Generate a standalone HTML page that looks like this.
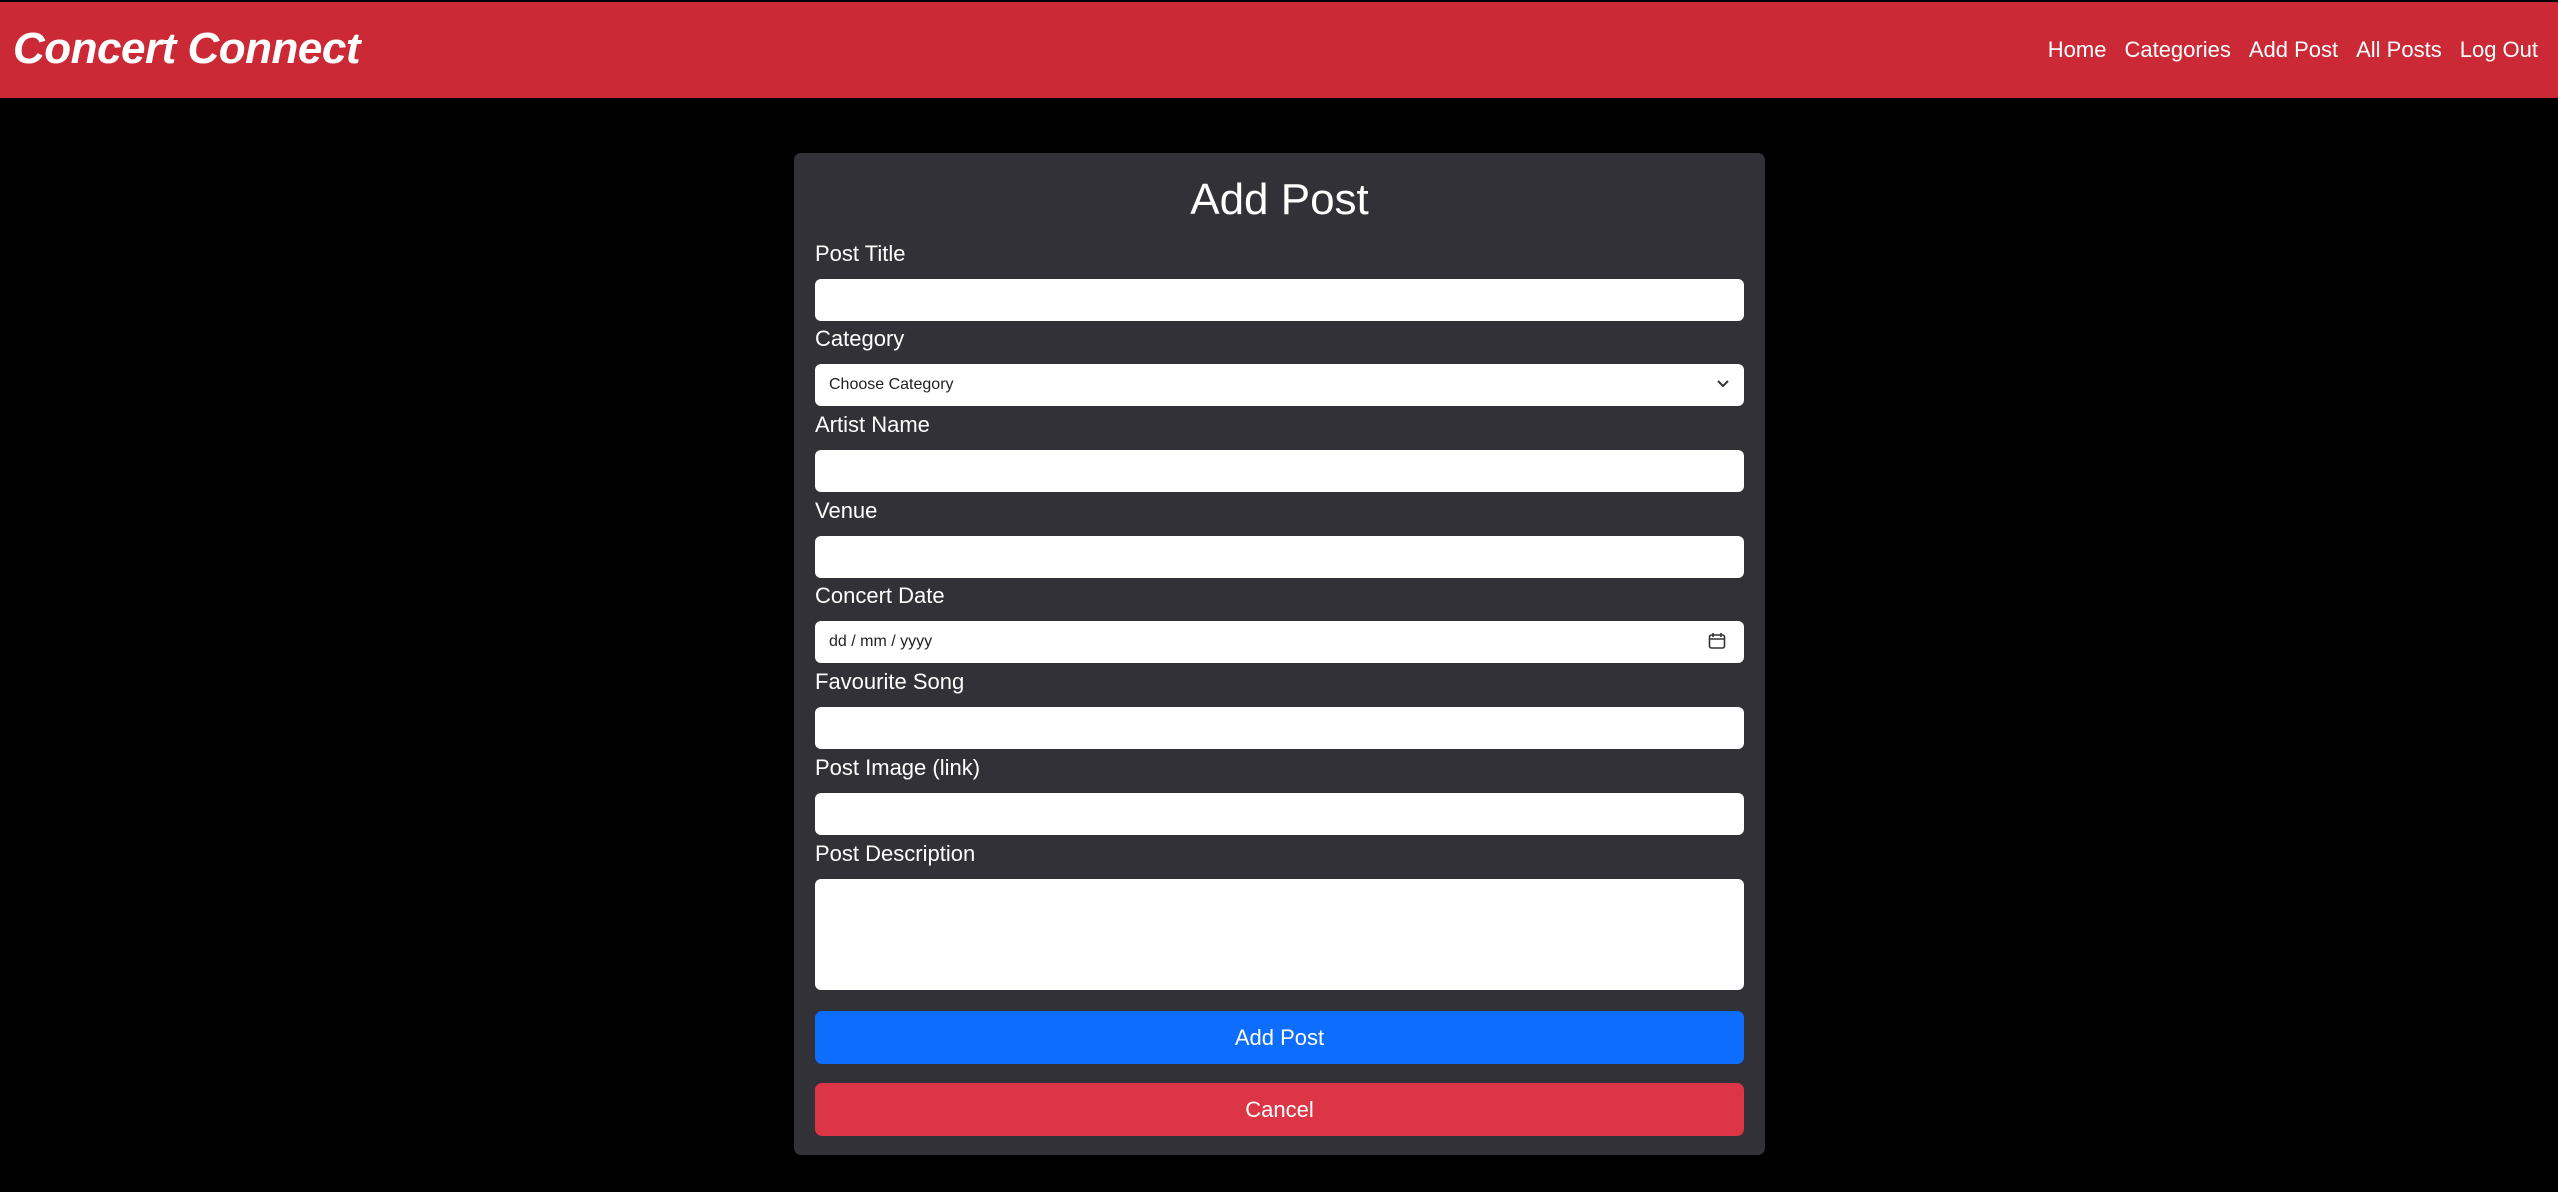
<!DOCTYPE html>
<html><head><meta charset="utf-8"><style>
body{margin:0;width:2558px;height:1192px;background:#000;font-family:"Liberation Sans",sans-serif;position:relative;overflow:hidden}
.nav{position:absolute;left:0;top:2px;width:2558px;height:96px;background:#cc2936}
.brand{position:absolute;left:13px;top:22px;font-size:44px;font-weight:bold;font-style:italic;color:#fff;letter-spacing:-0.5px}
.links{position:absolute;right:20px;top:35px;font-size:22px;color:#fff}
.links span{margin-left:18px}
.card{position:absolute;left:794px;top:153px;width:971px;height:1002px;background:#323137;border-radius:7px}
h1{position:absolute;left:0;width:971px;top:175px;margin:0;text-align:center;color:#fff;font-weight:normal;font-size:44px}
.lbl{position:absolute;left:815px;color:#fff;font-size:22px}
.in{position:absolute;left:815px;width:929px;height:42px;background:#fff;border-radius:6px}
.ph{position:absolute;left:14px;top:12px;font-size:16px;color:#222}
.btn{position:absolute;left:815px;width:929px;height:53px;border-radius:7px;color:#fff;font-size:22px;text-align:center;line-height:53px}
</style></head><body>
<div class="nav"><div class="brand">Concert Connect</div>
<div class="links"><span>Home</span><span>Categories</span><span>Add Post</span><span>All Posts</span><span>Log Out</span></div></div>
<div class="card"></div>
<h1 style="left:794px">Add Post</h1>
<div class="lbl" style="top:241px">Post Title</div><div class="in" style="top:279px"></div>
<div class="lbl" style="top:326px">Category</div><div class="in" style="top:364px"><div class="ph">Choose Category</div><svg style="position:absolute;right:14px;top:15px" width="14" height="10"><path d="M2 2l5 5 5-5" stroke="#333" stroke-width="2" fill="none"/></svg></div>
<div class="lbl" style="top:412px">Artist Name</div><div class="in" style="top:450px"></div>
<div class="lbl" style="top:498px">Venue</div><div class="in" style="top:536px"></div>
<div class="lbl" style="top:583px">Concert Date</div><div class="in" style="top:621px"><div class="ph">dd / mm / yyyy</div><svg style="position:absolute;right:18px;top:11px" width="18" height="18"><rect x="1.5" y="3" width="15" height="13" rx="2" stroke="#333" stroke-width="1.6" fill="none"/><path d="M2 7h14M5 1v4M13 1v4" stroke="#333" stroke-width="1.6"/></svg></div>
<div class="lbl" style="top:669px">Favourite Song</div><div class="in" style="top:707px"></div>
<div class="lbl" style="top:755px">Post Image (link)</div><div class="in" style="top:793px"></div>
<div class="lbl" style="top:841px">Post Description</div><div class="in" style="top:879px;height:111px"></div>
<div class="btn" style="top:1011px;background:#0d6efd">Add Post</div>
<div class="btn" style="top:1083px;background:#dc3545">Cancel</div>
</body></html>
